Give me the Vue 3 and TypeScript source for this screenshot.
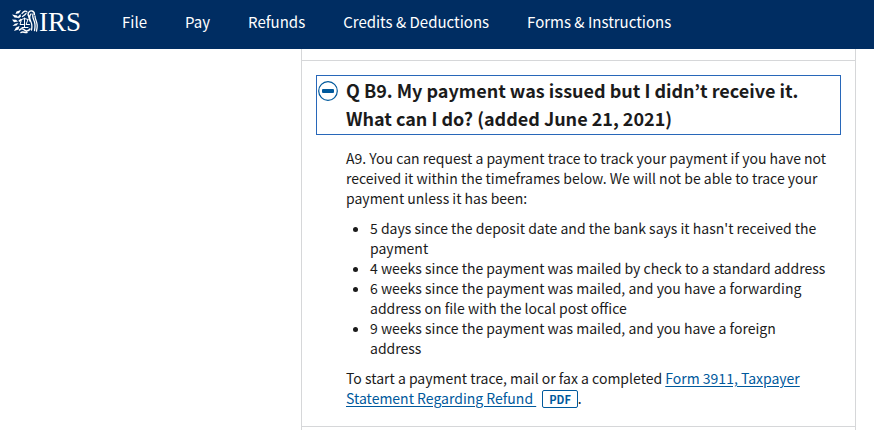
<script setup lang="ts">
interface NavItem {
  label: string
  href: string
}

const navItems: NavItem[] = [
  { label: 'File', href: '#file' },
  { label: 'Pay', href: '#pay' },
  { label: 'Refunds', href: '#refunds' },
  { label: 'Credits & Deductions', href: '#credits' },
  { label: 'Forms & Instructions', href: '#forms' },
]

const conditions: string[] = [
  "5 days since the deposit date and the bank says it hasn't received the payment",
  '4 weeks since the payment was mailed by check to a standard address',
  '6 weeks since the payment was mailed, and you have a forwarding address on file with the local post office',
  '9 weeks since the payment was mailed, and you have a foreign address',
]
</script>

<template>
  <div class="page">
    <header class="bar">
      <a class="logo" href="#home">
        <svg class="emblem" viewBox="0 0 26 24" aria-hidden="true">
          <g fill="#fff">
            <path d="M9 0 4.500 1.500 3.500 4 7 3.200zM0 4.500l5 1 1.500 2.500-4-.5zM0 9.500l4 .3 2 1.700-4 .7zM.5 16l2.500-2.300 3.500-.7-2 2.500zM2 21l2-3.500L7.500 16l-1 3.500zM8.500 4 6 6.500l.5 2L9 6.500zM9 8.500 6.500 10.500l.5 1.500L9 11z" />
          </g>
          <g fill="none" stroke="#fff" stroke-linecap="round" stroke-linejoin="round">
            <path stroke-width="1.300" d="M10 3.500C11.500 1 14 .5 15 2M10.500 6.500c1.500-1 3-2 3.500-3M16 5c0-3 2-4.500 4-4s2.500 2 2.500 3.500" />
            <path stroke-width="1.300" d="M19 4c-2 2-1.500 5 0 8s1 5 .5 8M21 4c-1 3 .5 5 1.500 8s.5 6 0 8.500M23 6c0 3 1.500 5 2 8s0 5-.5 7M16.500 5c0 2 1 4 1.500 6" />
            <path stroke-width="1" d="M12.500 8v9.500M9.500 9.500 12.500 8.500l3.500 1M9.500 9.500 8 14.500h3.500M16 9.500l-2 5h3.500M10 17.500h6" />
            <path stroke-width="1.500" d="M7.500 20c1.500-2 3.500-1.500 5 0s4 1 5.500-1M9 22.500c2-1.500 3.500.5 6 0" />
          </g>
        </svg>
        <span class="wordmark">IRS</span>
      </a>
      <nav class="nav" aria-label="Main">
        <a v-for="item in navItems" :key="item.href" :href="item.href">{{ item.label }}</a>
      </nav>
    </header>

    <main class="content">
      <div class="panel previous"></div>
      <section class="panel">
        <h2 class="heading">
          <button class="toggle" type="button" aria-expanded="true" aria-controls="answer-b9">
            <svg class="minus" viewBox="0 0 20 20" aria-hidden="true">
              <circle cx="10" cy="10" r="9.300" fill="#fff" stroke="#00599c" stroke-width="1.200" />
              <rect x="4" y="8" width="12" height="4" rx="1" fill="#00599c" />
            </svg>
            <span>Q B9. My payment was issued but I didn’t receive it. What can I do? (added June 21, 2021)</span>
          </button>
        </h2>
        <div id="answer-b9" class="answer">
          <p>A9. You can request a payment trace to track your payment if you have not received it within the timeframes below. We will not be able to trace your payment unless it has been:</p>
          <ul>
            <li v-for="condition in conditions" :key="condition">{{ condition }}</li>
          </ul>
          <p>To start a payment trace, mail or fax a completed <a href="#form-3911">Form 3911, Taxpayer Statement Regarding Refund&nbsp;</a><span class="pdf">PDF</span>.</p>
        </div>
      </section>
      <div class="panel next"></div>
    </main>
  </div>
</template>

<style>
body {
  background: #fff;
}
</style>

<style scoped>
.page {
  height: 100vh;
  overflow: hidden;
  font-family: "Noto Sans CJK KR", "Noto Sans", sans-serif;
  font-size: 14px;
  line-height: 20px;
  color: #1b1b1b;
}

.bar {
  display: flex;
  align-items: center;
  height: 49px;
  padding-left: 12px;
  padding-bottom: 5px;
  box-sizing: border-box;
  background: #002d62;
}

.logo {
  display: flex;
  align-items: center;
  gap: 1px;
  width: 110px;
  color: #fff;
  text-decoration: none;
}

.emblem {
  width: 26px;
  height: 24px;
}

.wordmark {
  font-family: "Liberation Serif", serif;
  font-size: 27px;
  line-height: 28px;
}

.nav {
  display: flex;
  gap: 38px;
  font-size: 15px;
  white-space: nowrap;
}

.nav a {
  color: #fff;
  text-decoration: none;
}

.content {
  padding: 0 18px 0 301px;
}

.panel {
  padding: 14px;
  border: 1px solid #d6d7d9;
  border-top: 0;
}

.previous,
.next {
  height: 11px;
  padding: 0;
}

.next {
  height: 60px;
}

.heading {
  margin: 0;
}

.toggle {
  display: flex;
  gap: 8px;
  width: 100%;
  padding: 0 0 2px 1px;
  border: 1px solid #2867b9;
  background: #fff;
  color: #1b1b1b;
  font: bold 18px/28px "Noto Sans CJK KR", "Noto Sans", sans-serif;
  text-align: left;
}

.minus {
  flex: none;
  width: 20px;
  height: 20px;
  margin-top: 5px;
}

.answer {
  padding: 13px 0 4px 30px;
}

p {
  margin: 0;
}

ul {
  margin: 10px 0;
  padding: 0 13px 0 24px;
}

.answer a {
  color: #00599c;
  text-underline-offset: 2px;
}

.pdf {
  display: inline-block;
  margin-left: 6px;
  padding: 0 6px;
  border: 1px solid #00599c;
  border-radius: 2px;
  color: #00599c;
  font-size: 11px;
  font-weight: bold;
  line-height: 16px;
}
</style>
